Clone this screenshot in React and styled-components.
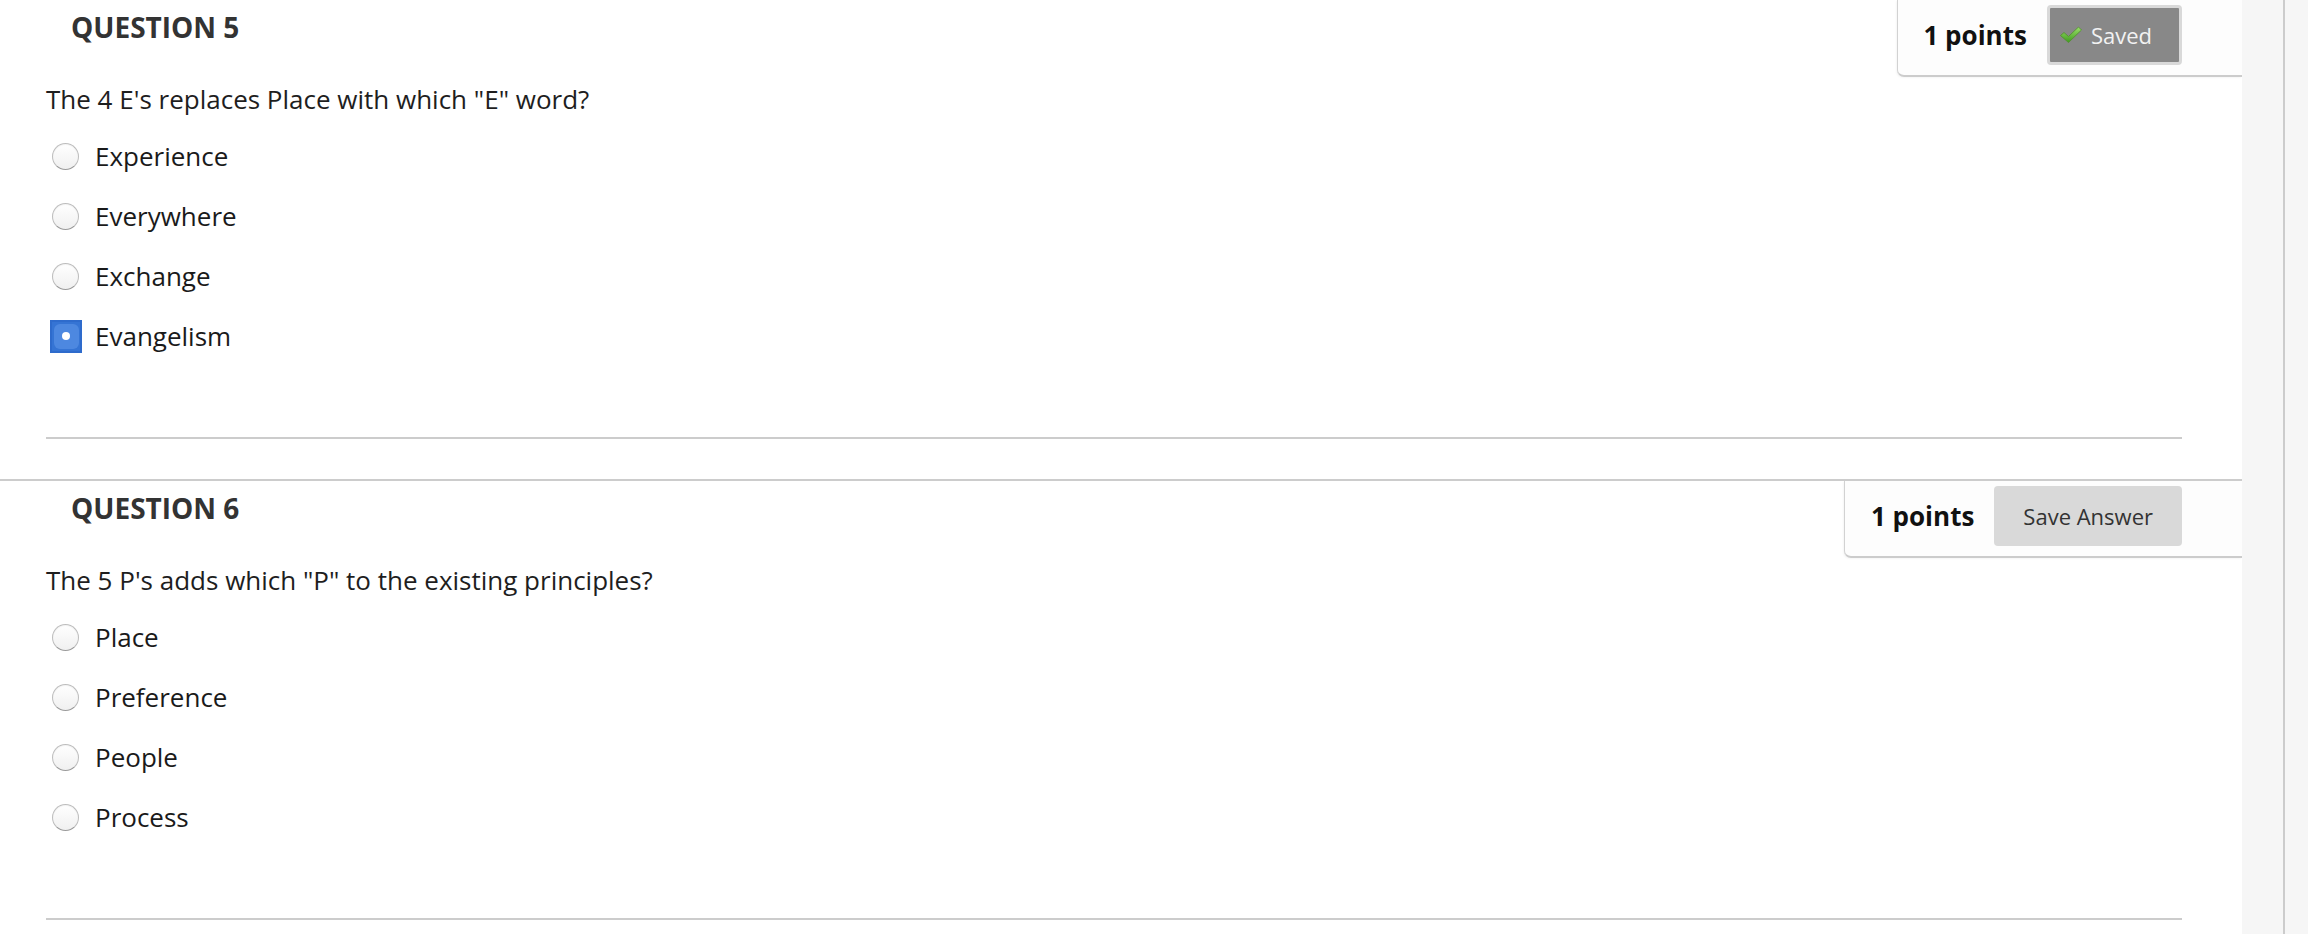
import React from "react";
import styled, { createGlobalStyle } from "styled-components";

const Global = createGlobalStyle`
  html, body { margin: 0; padding: 0; background: #ffffff; }
  body { font-family: "Open Sans", "Liberation Sans", sans-serif; overflow: hidden; }
  * { box-sizing: border-box; }
`;

const Page = styled.div`
  display: flex;
  width: 2308px;
  height: 934px;
  overflow: hidden;
`;

const Main = styled.div`
  flex: 1;
  min-width: 0;
  overflow: hidden;
  background: #ffffff;
`;

const Side = styled.div`
  width: 66px;
  background: #f6f6f6;
  display: flex;
`;

const SideRule = styled.div`
  margin-left: 41px;
  width: 2px;
  background: #cccccc;
`;

const Section = styled.section`
  border-top: 2px solid #cccccc;
  padding-bottom: 40px;
  margin-top: ${(p) => (p.$first ? "-2px" : "0")};
`;

const Header = styled.div`
  display: flex;
  justify-content: space-between;
  align-items: flex-start;
`;

const Title = styled.h3`
  margin: 8px 0 0 71px;
  font-size: 28px;
  line-height: 38px;
  font-weight: 700;
  color: #333333;
`;

const PointsBox = styled.div`
  display: flex;
  align-items: center;
  gap: 20px;
  padding: 5px 60px 10px 26px;
  background: #fdfdfd;
  border-left: 1px solid #d2d2d2;
  border-bottom: 2px solid #cccccc;
  border-bottom-left-radius: 7px;
  box-shadow: -1px 1px 2px rgba(0, 0, 0, 0.04);
`;

const Points = styled.span`
  font-size: 26px;
  font-weight: 700;
  color: #111111;
  line-height: 36px;
`;

const SaveButton = styled.button`
  height: 60px;
  display: flex;
  align-items: center;
  gap: 8px;
  font-family: "Open Sans", "Liberation Sans", sans-serif;
  font-size: 22px;
  border-radius: 4px;
  cursor: pointer;
  ${(p) =>
    p.$saved
      ? `
    background: #888888;
    color: #f2f2f2;
    border: 3px solid #d9d9d9;
    padding: 0 27px 0 9px;
  `
      : `
    background: #d9d9d9;
    color: #333333;
    border: none;
    padding: 0 29px;
  `}
`;

const Body = styled.div`
  padding: 0 60px 0 46px;
`;

const QuestionText = styled.p`
  margin: 4px 0 0;
  font-size: 26px;
  line-height: 36px;
  color: #1e1e1e;
`;

const Options = styled.ul`
  list-style: none;
  margin: 9px 0 0;
  padding: 0;
`;

const Option = styled.li`
  height: 60px;
  display: flex;
  align-items: center;
`;

const RadioSlot = styled.span`
  width: 49px;
  flex: none;
  display: flex;
  align-items: center;
`;

const Radio = styled.span`
  margin-left: 6px;
  width: 27px;
  height: 27px;
  border-radius: 50%;
  border: 1.5px solid #bdbdbd;
  border-bottom-color: #9a9a9a;
  background: linear-gradient(#ffffff, #f0f0f0);
  box-shadow: inset 0 1px 1px rgba(0, 0, 0, 0.05);
`;

const SelectedRing = styled.span`
  margin-left: 4px;
  width: 32px;
  height: 33px;
  background: #3574d4;
  border: 2px solid #2e6bcc;
  display: flex;
  align-items: center;
  justify-content: center;
`;

const SelectedFill = styled.span`
  width: 25px;
  height: 25px;
  border-radius: 6px;
  background: #4d88e0;
  display: flex;
  align-items: center;
  justify-content: center;
`;

const Dot = styled.span`
  width: 8px;
  height: 8px;
  border-radius: 50%;
  background: #ffffff;
`;

const Label = styled.span`
  font-size: 26px;
  line-height: 36px;
  color: #1a1a1a;
`;

const Rule = styled.hr`
  margin: 71px 0 0;
  border: none;
  height: 2px;
  background: #cccccc;
`;

const Check = () => (
  <svg width="24" height="20" viewBox="0 0 24 20" aria-hidden="true">
    <defs>
      <linearGradient id="chk" x1="0" y1="0" x2="0" y2="1">
        <stop offset="0" stopColor="#9be06a" />
        <stop offset="1" stopColor="#3f9b1f" />
      </linearGradient>
    </defs>
    <path
      d="M1.5 10.5 L5 7.5 L9.5 11.5 L19.5 2 L22.5 5 L9.5 17.5 Z"
      fill="url(#chk)"
      stroke="#4f8f2c"
      strokeWidth="0.8"
      strokeLinejoin="round"
    />
  </svg>
);

const questions = [
  {
    n: 5,
    text: 'The 4 E\'s replaces Place with which "E" word?',
    options: ["Experience", "Everywhere", "Exchange", "Evangelism"],
    selected: 3,
    saved: true,
  },
  {
    n: 6,
    text: 'The 5 P\'s adds which "P" to the existing principles?',
    options: ["Place", "Preference", "People", "Process"],
    selected: -1,
    saved: false,
  },
];

export default function App() {
  return (
    <>
      <Global />
      <Page>
        <Main>
          {questions.map((q, qi) => (
            <Section key={q.n} $first={qi === 0}>
              <Header>
                <Title>QUESTION {q.n}</Title>
                <PointsBox>
                  <Points>1 points</Points>
                  {q.saved ? (
                    <SaveButton $saved>
                      <Check />
                      Saved
                    </SaveButton>
                  ) : (
                    <SaveButton>Save Answer</SaveButton>
                  )}
                </PointsBox>
              </Header>
              <Body>
                <QuestionText>{q.text}</QuestionText>
                <Options>
                  {q.options.map((o, i) => (
                    <Option key={o}>
                      <RadioSlot>
                        {i === q.selected ? (
                          <SelectedRing>
                            <SelectedFill>
                              <Dot />
                            </SelectedFill>
                          </SelectedRing>
                        ) : (
                          <Radio />
                        )}
                      </RadioSlot>
                      <Label>{o}</Label>
                    </Option>
                  ))}
                </Options>
                <Rule />
              </Body>
            </Section>
          ))}
        </Main>
        <Side>
          <SideRule />
        </Side>
      </Page>
    </>
  );
}
